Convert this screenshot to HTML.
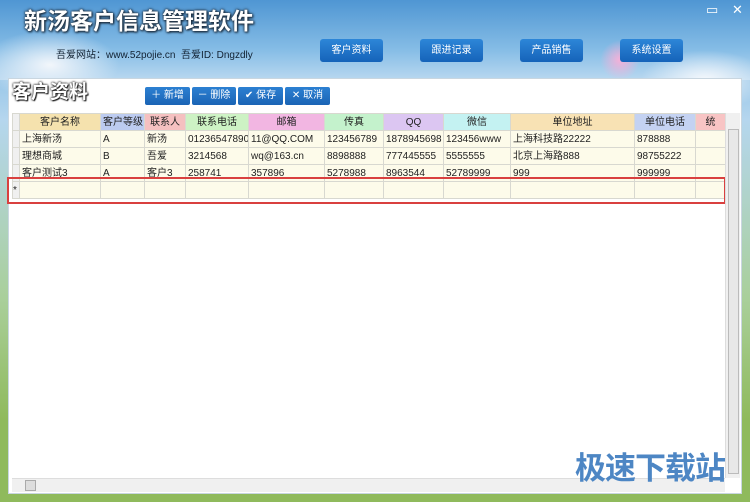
<!DOCTYPE html>
<html><head><meta charset="utf-8"><style>
*{margin:0;padding:0;box-sizing:border-box}
body{width:750px;height:502px;overflow:hidden;position:relative;font-family:"Liberation Sans","Noto Sans CJK SC",sans-serif;background:linear-gradient(180deg,#5d9fd6 0,#8cc0e6 60px,#b5d6ee 120px,#a9cf9a 300px,#8fba5c 420px,#8fba5c 502px)}
.sky{position:absolute;left:0;top:0;width:750px;height:80px;background:linear-gradient(180deg,#4f96d3,#86bde6 50px,#b9d8f0)}
.cloud{position:absolute;left:-20px;top:30px;width:140px;height:70px;border-radius:50%;background:radial-gradient(#f2f6fb,rgba(240,245,250,0) 70%)}
.cloud2{position:absolute;left:640px;top:50px;width:130px;height:60px;border-radius:50%;background:radial-gradient(#f5f8fc,rgba(240,245,250,0) 70%)}
.flower{position:absolute;left:600px;top:40px;width:40px;height:40px;background:radial-gradient(#f6b0d8,rgba(246,176,216,0) 70%)}
.title{position:absolute;left:24px;top:7px;font-size:23px;line-height:28px;font-weight:bold;color:#fff;text-shadow:0 0 2px #234,0 0 3px #234,1px 1px 2px #123}
.sub{position:absolute;left:56px;top:46px;font-size:10px;color:#123}
.nav{position:absolute;top:39px;width:63px;height:23px;background:linear-gradient(#2d86d8,#1563b9);border-radius:3px;color:#fff;font-size:10px;text-align:center;line-height:23px}
.wc{position:absolute;top:2px;color:#fff;font-size:13px}
.panel{position:absolute;left:8px;top:78px;width:734px;height:416px;background:#fff;border:1px solid #c9d6e0}
.ptitle{position:absolute;left:12px;top:80px;font-size:19px;line-height:26px;font-weight:bold;color:#fff;text-shadow:0 0 2px #333,0 0 2px #333,1px 1px 1px #000}
.btn{position:absolute;top:87px;height:18px;background:linear-gradient(#2c80d2,#1b64b5);border-radius:2px;color:#fff;font-size:10px;line-height:18px;text-align:center}
table{position:absolute;left:12px;top:113px;width:713px;border-collapse:collapse;font-size:10px;table-layout:fixed}
tr{height:17px}
td{border:1px solid #d8d8d0;height:17px;line-height:15px;padding:0 2px;white-space:nowrap;overflow:hidden;color:#222;background:#fdfbea}
tr.h td{text-align:center}
td.rh{background:#f0f0f0;padding:0}
.red{position:absolute;left:7px;top:177px;width:719px;height:27px;border:2px solid #d9403f}
.vs{position:absolute;left:725px;top:113px;width:15px;height:365px;background:#f0f0f0;border-left:1px solid #ddd}
.vs .th{position:absolute;left:2px;top:16px;width:11px;height:345px;background:#e8e8e8;border:1px solid #bbb}
.hs{position:absolute;left:12px;top:478px;width:713px;height:14px;background:#f0f0f0;border-top:1px solid #ddd}
.hs .th{position:absolute;left:13px;top:1px;width:11px;height:11px;background:#ddd;border:1px solid #aaa}
.wm{position:absolute;left:575px;top:451px;font-size:31px;line-height:36px;font-weight:bold;color:#4d86c4;letter-spacing:-1px}
</style></head><body>
<div class="sky"></div><div class="cloud"></div><div class="cloud2"></div><div class="flower"></div>
<div class="title">新汤客户信息管理软件</div>
<div class="sub">吾爱网站：www.52pojie.cn &nbsp;吾爱ID: Dngzdly</div>
<div class="nav" style="left:320px">客户资料</div>
<div class="nav" style="left:420px">跟进记录</div>
<div class="nav" style="left:520px">产品销售</div>
<div class="nav" style="left:620px">系统设置</div>
<div class="wc" style="left:706px">▭</div><div class="wc" style="left:732px">✕</div>
<div class="panel"></div>
<div class="ptitle">客户资料</div>
<div class="btn" style="left:145px;width:45px">＋ 新增</div>
<div class="btn" style="left:192px;width:44px">－ 删除</div>
<div class="btn" style="left:238px;width:45px">✔ 保存</div>
<div class="btn" style="left:285px;width:45px">✕ 取消</div>
<table>
<colgroup><col style="width:7px"><col style="width:81px"><col style="width:44px"><col style="width:41px"><col style="width:63px"><col style="width:76px"><col style="width:59px"><col style="width:60px"><col style="width:67px"><col style="width:124px"><col style="width:61px"><col style="width:30px"></colgroup>
<tr class="h"><td class="rh"></td><td style="background:#f5e2ae">客户名称</td><td style="background:#bccbf0">客户等级</td><td style="background:#f5c0c0">联系人</td><td style="background:#cdf2c4">联系电话</td><td style="background:#f2b6e2">邮箱</td><td style="background:#c4f2cc">传真</td><td style="background:#dcc6f2">QQ</td><td style="background:#c4f2f2">微信</td><td style="background:#f8e2b4">单位地址</td><td style="background:#c4d2f2">单位电话</td><td style="background:#f8c4c4">统</td></tr>
<tr><td class="rh"></td><td>上海新汤</td><td>A</td><td>新汤</td><td>01236547890</td><td>11@QQ.COM</td><td>123456789</td><td>1878945698</td><td>123456www</td><td>上海科技路22222</td><td>878888</td><td></td></tr>
<tr><td class="rh"></td><td>理想商城</td><td>B</td><td>吾爱</td><td>3214568</td><td>wq@163.cn</td><td>8898888</td><td>777445555</td><td>5555555</td><td>北京上海路888</td><td>98755222</td><td></td></tr>
<tr><td class="rh"></td><td>客户测试3</td><td>A</td><td>客户3</td><td>258741</td><td>357896</td><td>5278988</td><td>8963544</td><td>52789999</td><td>999</td><td>999999</td><td></td></tr>
<tr><td class="rh">*</td><td></td><td></td><td></td><td></td><td></td><td></td><td></td><td></td><td></td><td></td><td></td></tr>
</table>
<div class="red"></div>
<div class="vs"><div class="th"></div></div>
<div class="hs"><div class="th"></div></div>
<div class="wm">极速下载站</div>
</body></html>
